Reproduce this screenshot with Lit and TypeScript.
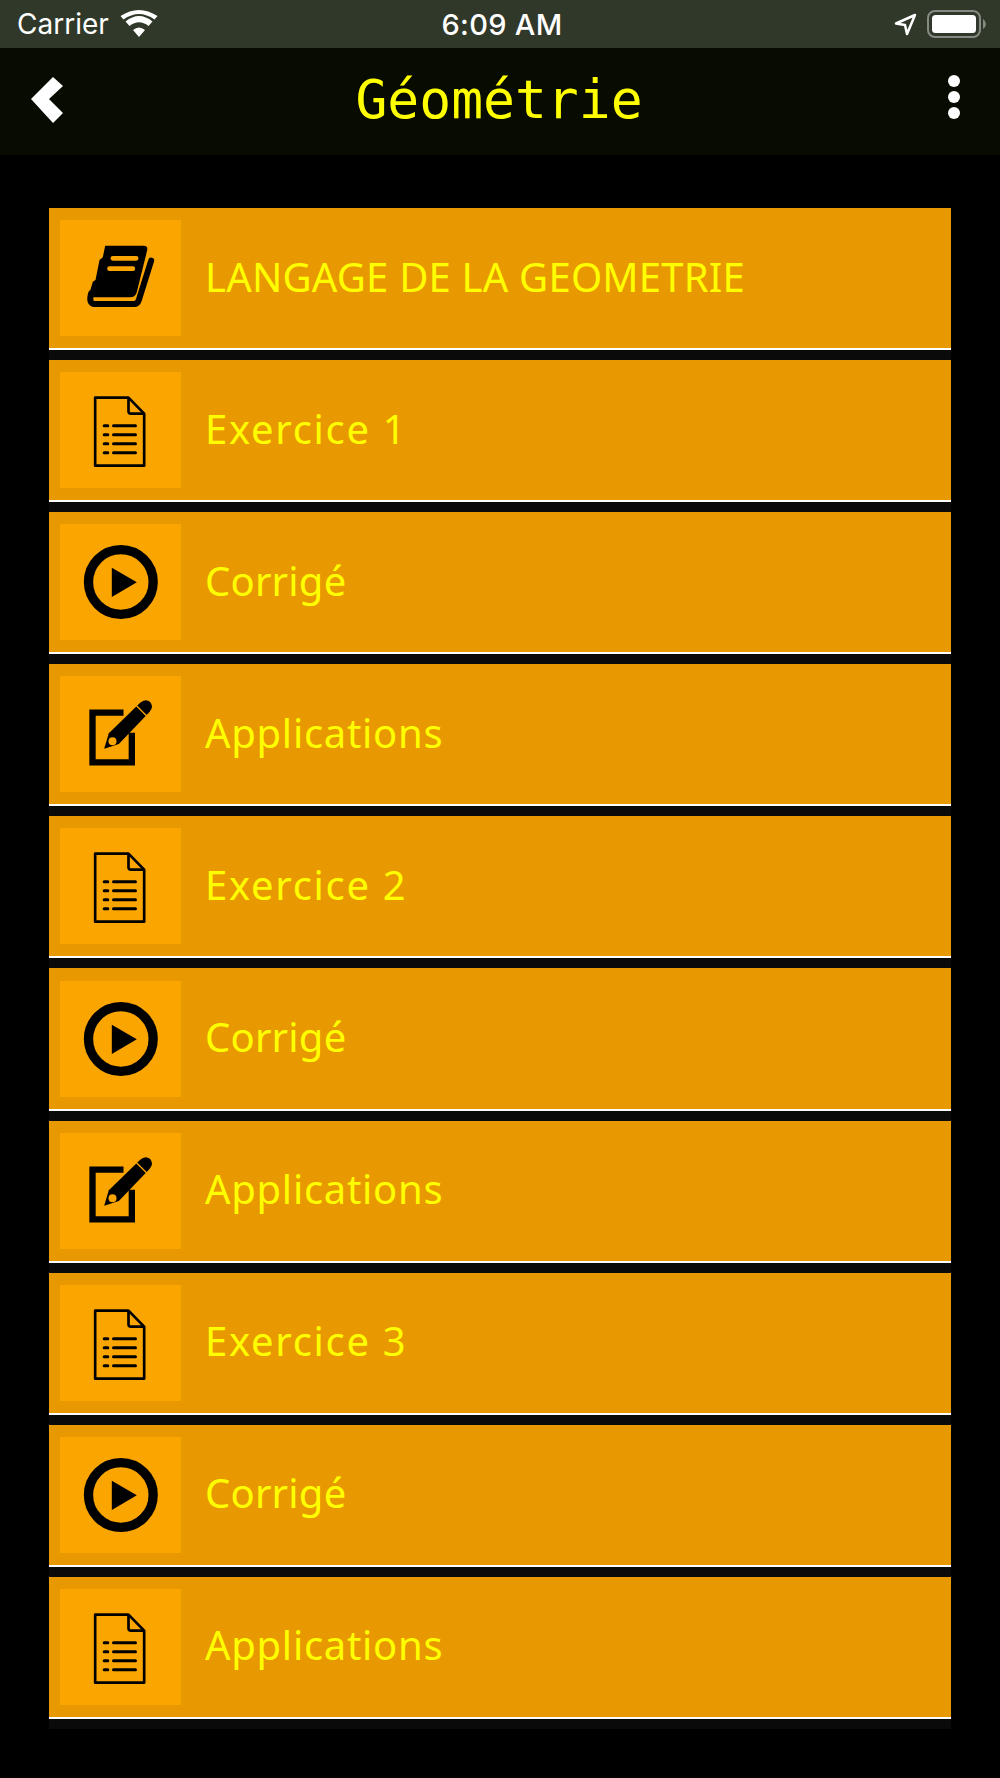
import { LitElement, html, css, svg } from 'lit';
import { customElement } from 'lit/decorators.js';

type IconName = 'book' | 'doc' | 'play' | 'edit';

const ICONS: Record<IconName, unknown> = {
  book: svg`
    <path d="M135 77H250Q264 77 261 91L230 216Q226 232 210 232H100L88 222L90 212L98 185L106 180L118 120L128 112Z" fill="#000"/>
    <path d="M104 252H222Q232 252 236 240L273 122" fill="none" stroke="#000" stroke-width="18" stroke-linecap="round"/>
    <path d="M93 220Q84 252 104 252" fill="none" stroke="#000" stroke-width="18" stroke-linecap="round"/>
    <path d="M158 115H228M148 146H218" fill="none" stroke="#fba500" stroke-width="14" stroke-linecap="round"/>`,
  doc: svg`
    <path d="M105 77H205L252 125V281H105Z" fill="none" stroke="#000" stroke-width="8" stroke-linejoin="round"/>
    <path d="M205 77V118Q205 125 212 125H252" fill="none" stroke="#000" stroke-width="8"/>
    <path d="M132 161H143M132 188H143M132 215H143M132 242H143M160 161H226M160 188H226M160 215H226M160 242H226" fill="none" stroke="#000" stroke-width="9" stroke-linecap="round"/>`,
  play: svg`
    <circle cx="182" cy="174" r="97" fill="none" stroke="#000" stroke-width="28"/>
    <path d="M155 131L230 175L155 219Z" fill="#000"/>`,
  edit: svg`
    <path d="M190 110H97V259H215V170" fill="none" stroke="#000" stroke-width="19"/>
    <path d="M132 218L146 172L240 80Q256 66 270 78Q282 92 268 108L176 204Z" fill="#000"/>
    <path d="M226 86L262 122" stroke="#fba500" stroke-width="4"/>
    <circle cx="157" cy="196" r="12" fill="#fba500"/>`,
};

// tracking evens out the width difference with the original typeface
const ROWS: { icon: IconName; label: string; tracking: number }[] = [
  { icon: 'book', label: 'LANGAGE DE LA GEOMETRIE', tracking: 0.2 },
  { icon: 'doc', label: 'Exercice 1', tracking: 1.7 },
  { icon: 'play', label: 'Corrigé', tracking: 0.2 },
  { icon: 'edit', label: 'Applications', tracking: 0.7 },
  { icon: 'doc', label: 'Exercice 2', tracking: 1.7 },
  { icon: 'play', label: 'Corrigé', tracking: 0.2 },
  { icon: 'edit', label: 'Applications', tracking: 0.7 },
  { icon: 'doc', label: 'Exercice 3', tracking: 1.7 },
  { icon: 'play', label: 'Corrigé', tracking: 0.2 },
  { icon: 'doc', label: 'Applications', tracking: 0.7 },
];

@customElement('app-root')
export class AppRoot extends LitElement {
  static styles = css`
    :host {
      display: block;
      width: 1000px;
      height: 1778px;
      background: #000;
      overflow: hidden;
    }

    .status {
      height: 48px;
      background: #30382a;
      color: #fff;
      display: grid;
      grid-template-columns: 1fr auto 1fr;
      align-items: center;
      padding: 0 13px 0 17px;
      font-family: Inter, 'Liberation Sans', sans-serif;
      font-size: 28px;
    }

    .status-left,
    .status-right {
      display: flex;
      align-items: center;
    }

    .status-left {
      gap: 11px;
    }

    .status-right {
      justify-content: flex-end;
      gap: 10px;
    }

    .time {
      font-weight: 500;
      font-size: 29px;
      letter-spacing: 0.3px;
    }

    .nav {
      height: 107px;
      box-sizing: border-box;
      padding: 0 40px 4px;
      background: #070b00;
      display: grid;
      grid-template-columns: 1fr auto 1fr;
      align-items: center;
    }

    .title {
      color: #ff0;
      font-family: 'DejaVu Sans Mono', monospace;
      font-size: 53px;
      margin-left: -2px;
    }

    .back {
      display: block;
      margin-left: -10px;
    }

    .dots {
      display: block;
      justify-self: end;
      margin-bottom: 6px;
    }

    .list {
      display: flex;
      flex-direction: column;
      padding: 53px 49px 0;
    }

    .item {
      background: #0a0a0a;
      padding-bottom: 10px;
    }

    .row {
      height: 140.1px;
      border-bottom: 2px solid #fff;
      background: #e89800;
      display: flex;
      align-items: center;
      gap: 24px;
      padding-left: 11px;
    }

    .icon {
      flex: none;
      width: 121px;
      height: 116px;
      display: block;
      background: #fba500;
    }

    .label {
      color: #ff0;
      font-family: 'Noto Sans', sans-serif;
      font-size: 40px;
      margin-bottom: 4px;
    }
  `;

  render() {
    return html`
      <div class="status">
        <div class="status-left">
          <span>Carrier</span>
          <svg width="38" height="28" viewBox="0 0 38 28">
            <path d="M19 27L13 20Q19 15 25 20ZM9.5 16L5.500 11.500Q19 0.500 32.500 11.500L28.500 16Q19 8.500 9.500 16ZM3.500 9.500L0.500 6Q19 -6 37.500 6L34.500 9.500Q19 -1.500 3.500 9.500Z" fill="#fff"/>
          </svg>
        </div>
        <span class="time">6:09 AM</span>
        <div class="status-right">
          <svg width="23" height="23" viewBox="0 0 23 23">
            <path d="M21 2L2 10.500L11 12L13 21Z" fill="none" stroke="#fff" stroke-width="2.500" stroke-linejoin="round"/>
          </svg>
          <svg width="60" height="28" viewBox="0 0 60 28">
            <rect x="1" y="1" width="52" height="26" rx="7" fill="none" stroke="#868a82" stroke-width="2"/>
            <rect x="5" y="5" width="44" height="18" rx="3.500" fill="#fff"/>
            <path d="M56 9Q59 11 59 14Q59 17 56 19Z" fill="#868a82"/>
          </svg>
        </div>
      </div>
      <div class="nav">
        <svg class="back" width="34" height="48" viewBox="0 0 34 48">
          <path d="M1 23L23 1L33 10L19 23L33 37L23 47Z" fill="#fff"/>
        </svg>
        <span class="title">Géométrie</span>
        <svg class="dots" width="12" height="44" viewBox="0 0 12 44">
          <circle cx="6" cy="6" r="6" fill="#fff"/>
          <circle cx="6" cy="22" r="6" fill="#fff"/>
          <circle cx="6" cy="38" r="6" fill="#fff"/>
        </svg>
      </div>
      <div class="list">
        ${ROWS.map(
          (row) => html`
            <div class="item">
              <div class="row">
                <svg class="icon" viewBox="0 0 362 348">${ICONS[row.icon]}</svg>
                <span class="label" style="letter-spacing: ${row.tracking}px">${row.label}</span>
              </div>
            </div>
          `
        )}
      </div>
    `;
  }
}
